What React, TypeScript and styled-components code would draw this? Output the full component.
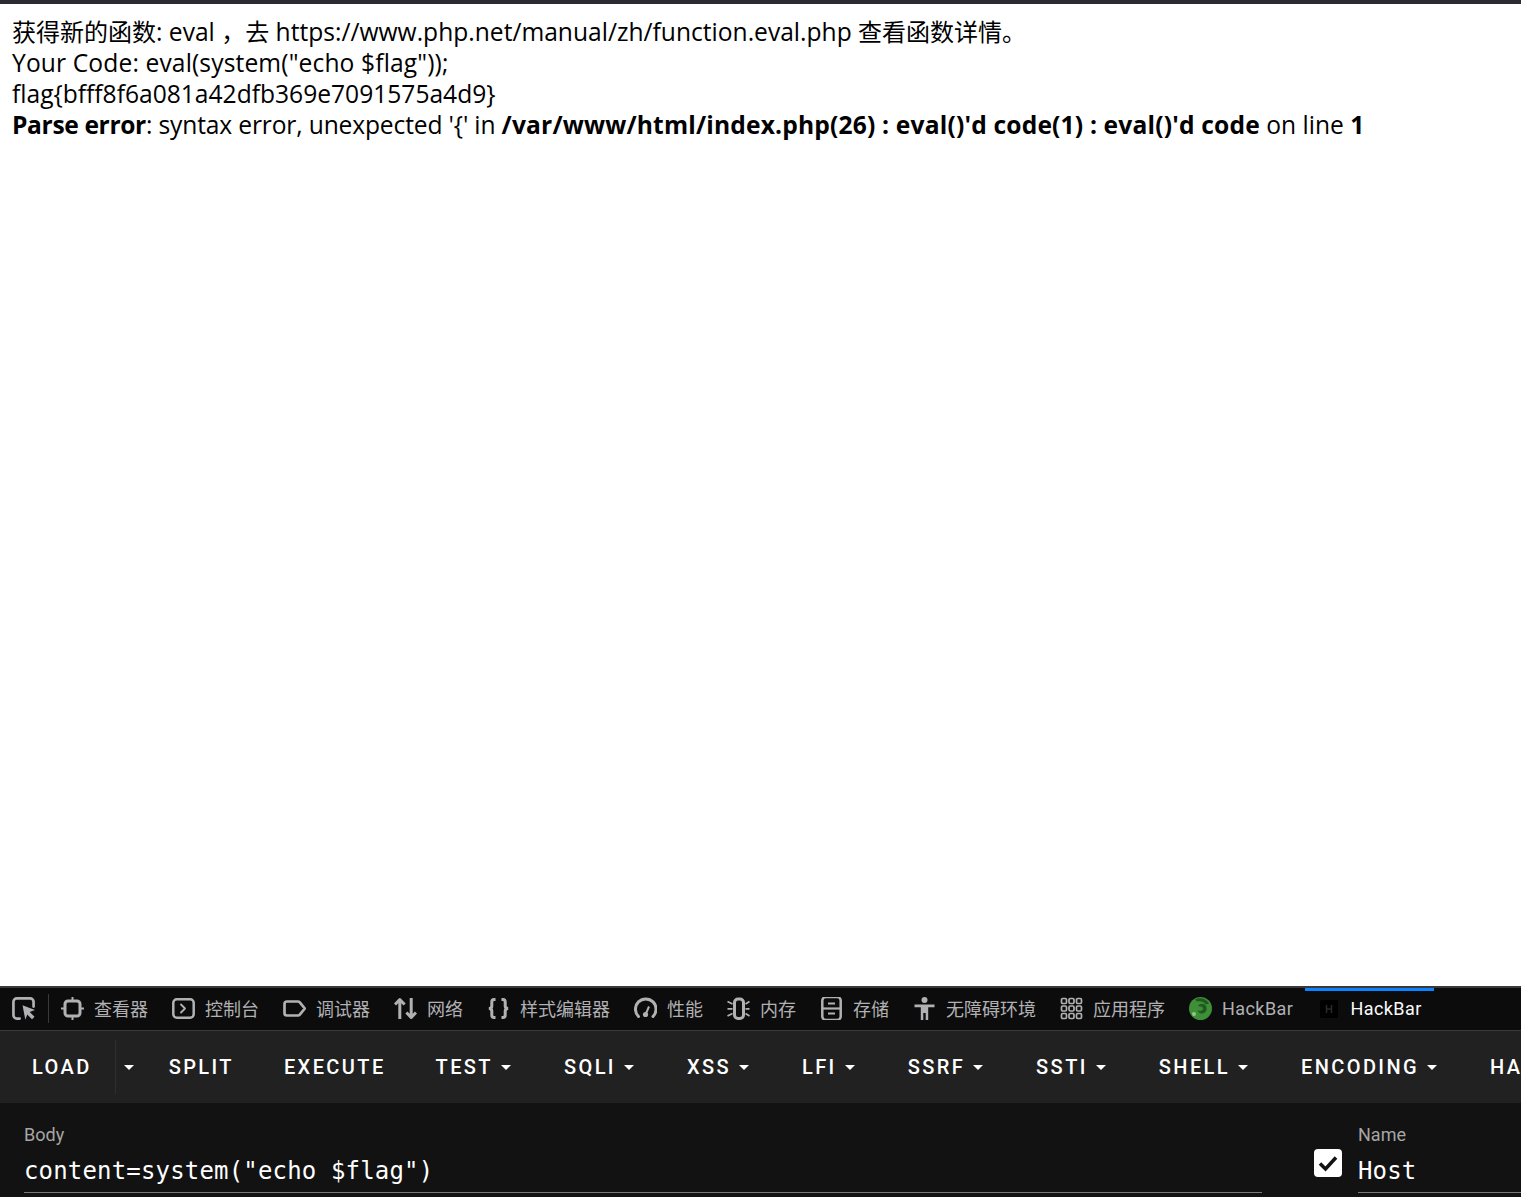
import React from "react";
import styled, { createGlobalStyle } from "styled-components";

const Global = createGlobalStyle`
  html, body { margin: 0; padding: 0; height: 100%; background: #fff; overflow: hidden; }
  #root { height: 100%; }
`;

const Page = styled.div`
  height: 1197px;
  display: flex;
  flex-direction: column;
  overflow: hidden;
`;
const TopEdge = styled.div`
  height: 4px;
  background: #2b2a33;
  flex: none;
`;
const Output = styled.main`
  flex: 1;
  min-height: 0;
  padding: 12px 12px 0;
  background: #fff;
  color: #000;
  font: 24.6px/31px "Open Sans", "Noto Sans CJK SC", sans-serif;
`;
const Line = styled.div<{ $track?: number }>`
  white-space: nowrap;
  letter-spacing: ${(p) => p.$track ?? 0}px;
`;
const Cjk = styled.span`
  font-size: 24px;
`;
const Strong = styled.b<{ $track?: number }>`
  font-weight: 700;
  letter-spacing: ${(p) => p.$track ?? 0}px;
`;
const Plain = styled.span<{ $track?: number }>`
  letter-spacing: ${(p) => p.$track ?? 0}px;
`;
const Devtools = styled.section`
  flex: none;
  background: #121212;
  border-top: 2px solid #38383d;
  overflow: hidden;
`;
const TabBar = styled.nav`
  height: 42px;
  display: flex;
  align-items: stretch;
  background: #0c0c0d;
  border-bottom: 1px solid #38383d;
  font: 18px "Roboto", "Noto Sans CJK SC", sans-serif;
  color: #b1b1b3;
`;
const Picker = styled.div`
  width: 48px;
  flex: none;
  display: flex;
  align-items: center;
  padding: 0 0 2px 12px;
  box-sizing: border-box;
  position: relative;
  &::after {
    content: "";
    position: absolute;
    right: -1px;
    top: 6px;
    bottom: 7px;
    width: 1px;
    background: #38383d;
  }
`;
const Tab = styled.div<{ $active?: boolean; $latin?: boolean }>`
  position: relative;
  display: flex;
  align-items: center;
  gap: 10px;
  padding: 0 12px 2px;
  flex: none;
  color: ${(p) => (p.$active ? "#fbfbfe" : "#b1b1b3")};
  letter-spacing: ${(p) => (p.$latin ? "0.44px" : "0")};
  ${(p) =>
    p.$active &&
    `&::before { content: ""; position: absolute; left: 0; right: 0; top: 0; height: 3px; background: #0a84ff; }`}
`;
const TabFirst = styled(Tab)`
  margin-left: 1px;
`;
const TabIcon = styled.svg`
  width: 23px;
  height: 23px;
  flex: none;
  fill: none;
  stroke: #b1b1b3;
  stroke-width: 2.5;
`;
const Toolbar = styled.div`
  height: 72px;
  background: #212121;
  display: flex;
  align-items: center;
  padding-left: 6px;
  font: 500 20px "Roboto", sans-serif;
  letter-spacing: 2.4px;
  color: #fff;
  white-space: nowrap;
`;
const ToolButton = styled.div`
  flex: none;
  display: flex;
  align-items: center;
  gap: 8px;
  padding: 0 24px 0 26px;
  height: 54px;
`;
const LoadButton = styled(ToolButton)`
  padding-right: 23px;
  border-right: 1px solid #2e2e2e;
`;
const CaretButton = styled.div`
  flex: none;
  width: 27px;
  height: 54px;
  display: flex;
  align-items: center;
  justify-content: center;
`;
const Caret = styled.i`
  width: 0;
  height: 0;
  border-left: 5.5px solid transparent;
  border-right: 5.5px solid transparent;
  border-top: 5.5px solid #fff;
`;
const MenuCaret = styled(Caret)`
  margin-right: 3px;
`;
const Form = styled.div`
  height: 94px;
  display: flex;
  background: #121212;
`;
const BodyField = styled.div`
  width: 1238px;
  margin-left: 24px;
  flex: none;
`;
const CheckCell = styled.div`
  width: 96px;
  flex: none;
  display: flex;
  justify-content: flex-end;
  padding: 46px 16px 0 0;
  box-sizing: border-box;
`;
const NameField = styled.div`
  flex: 1;
`;
const FieldLabel = styled.div`
  font: 18px/21px "Roboto", sans-serif;
  color: #a6a6a6;
  padding-top: 21px;
`;
const FieldValue = styled.div`
  font: 24px/34px "DejaVu Sans Mono", monospace;
  letter-spacing: 0.17px;
  color: #fff;
  height: 48px;
  box-sizing: border-box;
  padding-top: 9px;
  border-bottom: 1px solid #7a7a7a;
  white-space: nowrap;
`;
const Check = styled.svg`
  width: 28px;
  height: 28px;
  display: block;
`;

const stroke = { strokeLinecap: "round", strokeLinejoin: "round" } as const;

const tabs: { label: string; latin?: boolean; icon: React.ReactNode }[] = [
  {
    label: "控制台",
    icon: (
      <>
        <rect x="1.3" y="2.3" width="20.4" height="18.4" rx="3.5" />
        <path d="M9 7.500l4 4-4 4" {...stroke} strokeWidth="1.800" />
      </>
    ),
  },
  {
    label: "调试器",
    icon: <path d="M4 4.500h11a2.500 2.500 0 0 1 1.800.8l5 6.200-5 6.200a2.500 2.500 0 0 1-1.800.8H4a2.500 2.500 0 0 1-2.500-2.500V7A2.500 2.500 0 0 1 4 4.500z" {...stroke} strokeWidth="2.700" />,
  },
  {
    label: "网络",
    icon: (
      <g strokeWidth="3" strokeLinejoin="round">
        <path d="M5.800 22V2M1 7.500l4.800-5 4.800 5" />
        <path d="M17.200 1v20M12.400 15.500l4.800 5 4.800-5" />
      </g>
    ),
  },
  {
    label: "样式编辑器",
    icon: (
      <g strokeWidth="3">
        <path d="M8.500 2.500H7C5.500 2.500 4.800 3.500 4.800 5v4c0 1.500-1 2.500-3 2.500 2 0 3 1 3 2.500v4c0 1.500.7 2.500 2.200 2.500h1.500" />
        <path d="M14.500 2.500H16c1.500 0 2.200 1 2.200 2.500v4c0 1.500 1 2.500 3 2.500-2 0-3 1-3 2.500v4c0 1.500-.7 2.500-2.200 2.500h-1.500" />
      </g>
    ),
  },
  {
    label: "性能",
    icon: (
      <>
        <path d="M4.500 19.500A10.300 10.300 0 1 1 19 19.500" strokeWidth="3" {...stroke} />
        <path d="M15 9.500l-3 7" strokeWidth="2" />
        <circle cx="11.500" cy="17.500" r="2.600" fill="#b1b1b3" stroke="none" />
      </>
    ),
  },
  {
    label: "内存",
    icon: (
      <>
        <rect x="7.500" y="2" width="9" height="19.500" rx="3.500" strokeWidth="3" />
        <path d="M0.500 4.500l5 2.500M0.500 11.800h5M0.500 19l5-2.500M18.500 7l4-2.500M18.500 11.800h4M18.500 16.500l4 2.500" strokeWidth="1.700" />
      </>
    ),
  },
  {
    label: "存储",
    icon: (
      <>
        <rect x="2.300" y="0" width="18.400" height="23" rx="3.500" strokeWidth="2.500" />
        <path d="M2 11.500h19" strokeWidth="2.200" />
        <path d="M8 6.500h7M8 16.500h7" strokeWidth="2" />
      </>
    ),
  },
  {
    label: "无障碍环境",
    icon: (
      <g fill="#b1b1b3" stroke="none">
        <circle cx="11.500" cy="3" r="3" />
        <path d="M1.500 7.500h20v2.800h-6.300V23h-2.500v-7h-2.400v7H7.800V10.300H1.500z" />
      </g>
    ),
  },
  {
    label: "应用程序",
    icon: (
      <g strokeWidth="1.700">
        {[1.500, 9, 16.500].flatMap((y) =>
          [1.500, 9, 16.500].map((x) => <rect key={`${x}-${y}`} x={x} y={y} width="5" height="5" rx="1.200" />)
        )}
      </g>
    ),
  },
  {
    label: "HackBar",
    latin: true,
    icon: (
      <>
        <circle cx="11.500" cy="11.500" r="11.500" fill="#3f8f38" stroke="none" />
        <path d="M6 2.500c5-2.500 11-1 14 4l-3 1c-2-3-6-4-9-3l-2-2z" fill="#1f5a20" stroke="none" />
        <path d="M9 9c2-3 7-3 8.500 1 1 4-2 7-5.500 6.500-2-.5-3-2-3.500-3.500 2 1.500 5 1 5.500-1 .3-1.500-1-2.500-2.500-2.500z" fill="#1f5a20" stroke="none" />
        <circle cx="5" cy="17" r="2" fill="#8fc97f" stroke="none" />
      </>
    ),
  },
];

const menus = ["TEST", "SQLI", "XSS", "LFI", "SSRF", "SSTI", "SHELL", "ENCODING"];

export default function App() {
  return (
    <Page>
      <Global />
      <TopEdge />
      <Output>
        <Line>
          <Cjk>获得新的函数</Cjk>: eval <Cjk>，去</Cjk> https://www.php.net/manual/zh/function.eval.php <Cjk>查看函数详情。</Cjk>
        </Line>
        <Line $track={0.13}>Your Code: eval(system("echo $flag"));</Line>
        <Line>flag{"{"}bfff8f6a081a42dfb369e7091575a4d9{"}"}</Line>
        <Line>
          <Strong $track={-0.36}>Parse error</Strong>
          <Plain $track={-0.15}>: syntax error, unexpected '{"{"}' in </Plain>
          <Strong $track={0.17}>/var/www/html/index.php(26) : eval()'d code(1) : eval()'d code</Strong> on line <Strong>1</Strong>
        </Line>
      </Output>
      <Devtools>
        <TabBar>
          <Picker>
            <TabIcon viewBox="0 0 24 24">
              <path d="M8 22.500H5a3.500 3.500 0 0 1-3.500-3.500V5A3.500 3.500 0 0 1 5 1.500h14A3.500 3.500 0 0 1 22.500 5v5" {...stroke} strokeWidth="2.800" />
              <path d="M11 8.500l13 5-5.500 2.200 5 5-2.600 2.600-5-5-2 5.500z" fill="#b1b1b3" stroke="none" />
            </TabIcon>
          </Picker>
          <TabFirst>
            <TabIcon viewBox="0 0 23 23">
              <rect x="4" y="4" width="15" height="15" rx="3" strokeWidth="3" />
              <path d="M11.500 0v3M11.500 20v3M0 11.500h3M20 11.500h3" strokeWidth="2" />
            </TabIcon>
            查看器
          </TabFirst>
          {tabs.map((t) => (
            <Tab key={t.label} $latin={t.latin}>
              <TabIcon viewBox="0 0 23 23">{t.icon}</TabIcon>
              {t.label}
            </Tab>
          ))}
          <Tab $active $latin>
            <TabIcon viewBox="0 0 23 23">
              <rect x="3" y="3" width="18" height="18" rx="2" fill="#000" stroke="none" />
              <path d="M9.500 8v8M14.500 8v8M9.500 12h5" stroke="#2a2a2a" strokeWidth="1.500" />
            </TabIcon>
            HackBar
          </Tab>
        </TabBar>
        <Toolbar>
          <LoadButton>LOAD</LoadButton>
          <CaretButton>
            <Caret />
          </CaretButton>
          <ToolButton>SPLIT</ToolButton>
          <ToolButton>EXECUTE</ToolButton>
          {menus.map((m) => (
            <ToolButton key={m}>
              {m}
              <MenuCaret />
            </ToolButton>
          ))}
          <ToolButton>HASHING</ToolButton>
        </Toolbar>
        <Form>
          <BodyField>
            <FieldLabel>Body</FieldLabel>
            <FieldValue>content=system("echo $flag")</FieldValue>
          </BodyField>
          <CheckCell>
            <Check viewBox="0 0 28 28">
              <rect width="28" height="28" rx="4" fill="#fff" />
              <path d="M6 14.500l5.500 5.500L22 8.500" fill="none" stroke="#121212" strokeWidth="3.500" />
            </Check>
          </CheckCell>
          <NameField>
            <FieldLabel>Name</FieldLabel>
            <FieldValue>Host</FieldValue>
          </NameField>
        </Form>
      </Devtools>
    </Page>
  );
}
